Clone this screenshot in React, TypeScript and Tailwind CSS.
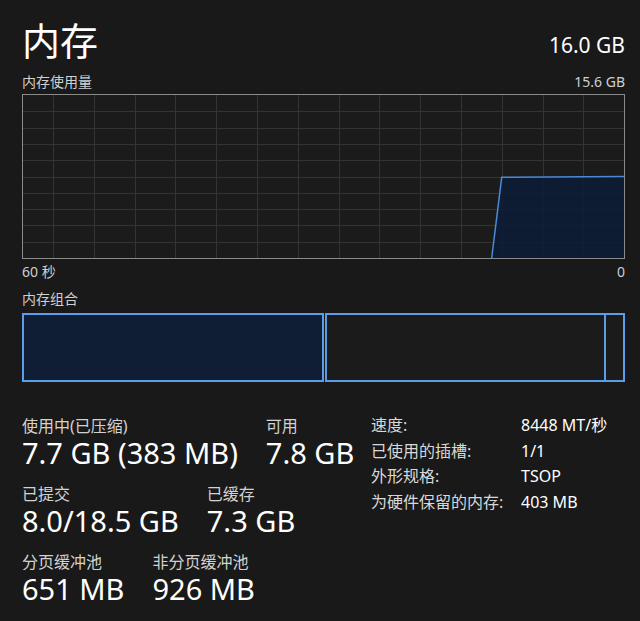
import React from 'react';

const FONT = '"Noto Sans", "Noto Sans CJK SC", sans-serif';

const vLines = Array.from({ length: 14 }, (_, i) => 30 + i * 40.8);
const hLines = Array.from({ length: 9 }, (_, i) => (i + 1) * 16.3);

function UsageGraph() {
  return (
    <div className="w-[603px] h-[165px] border border-[#8a8a8a] bg-[#1b1b1b]">
      <svg width={601} height={163} viewBox="0 0 601 163" className="block">
        {vLines.map((x) => (
          <line key={`v${x}`} x1={Math.round(x) + 0.5} y1={0} x2={Math.round(x) + 0.5} y2={163} stroke="#333333" strokeWidth={1} />
        ))}
        {hLines.map((y) => (
          <line key={`h${y}`} x1={0} y1={Math.round(y) + 0.5} x2={601} y2={Math.round(y) + 0.5} stroke="#333333" strokeWidth={1} />
        ))}
        <path d="M468.7 163 L478.7 82.3 L601 81.5 L601 163 Z" fill="#0b1c36" fillOpacity={0.85} />
        <path d="M468.7 163 L478.7 82.3 L601 81.5" fill="none" stroke="#4a8ad6" strokeWidth={1.5} />
      </svg>
    </div>
  );
}

function Composition() {
  return (
    <div className="flex w-[603px] h-[69px]">
      <div className="w-[302px] h-full border-2 border-[#5a9eea] bg-[#0f1d35]" />
      <div className="ml-px w-[281px] h-full border-2 border-[#5a9eea] bg-[#1b1b1b]" />
      <div className="w-[19px] h-full border-y-2 border-r-2 border-[#5a9eea] bg-[#1b1b1b]" />
    </div>
  );
}

function Stat({ label, value }: { label: string; value: string }) {
  return (
    <div className="flex flex-col">
      <span className="h-[20px] leading-[20px] text-[16px] text-[#d2d2d2] whitespace-nowrap">{label}</span>
      <span className="h-[34px] leading-[34px] text-[29px] text-white whitespace-nowrap">{value}</span>
    </div>
  );
}

const specs = [
  ['速度:', '8448 MT/秒'],
  ['已使用的插槽:', '1/1'],
  ['外形规格:', 'TSOP'],
  ['为硬件保留的内存:', '403 MB'],
];

export default function App() {
  return (
    <div className="w-[640px] h-[621px] bg-[#191919] text-white pl-[22px] pr-[15px] overflow-hidden" style={{ fontFamily: FONT }}>
      {/* header */}
      <div className="flex justify-between items-center h-[40px] mt-[20px]">
        <span className="text-[38px] leading-[40px]">内存</span>
        <span className="text-[21px] leading-[24px] pt-[10px]">16.0 GB</span>
      </div>

      <div className="flex justify-between items-center h-[18px] mt-[12px] text-[14px] text-[#d0d0d0]">
        <span>内存使用量</span>
        <span>15.6 GB</span>
      </div>

      <div className="mt-[4px]">
        <UsageGraph />
      </div>

      <div className="flex justify-between items-center w-[603px] h-[20px] mt-[2px] text-[14px] text-[#d0d0d0]">
        <span>60 秒</span>
        <span>0</span>
      </div>

      <div className="flex items-center h-[20px] mt-[7px] text-[14px] text-[#d0d0d0]">内存组合</div>

      <div className="mt-[5px]">
        <Composition />
      </div>

      {/* stats */}
      <div className="flex mt-[34px]">
        <div className="w-[349px] flex flex-col gap-[14px]">
          <div className="flex gap-[28px]">
            <Stat label="使用中(已压缩)" value="7.7 GB (383 MB)" />
            <Stat label="可用" value="7.8 GB" />
          </div>
          <div className="flex gap-[28px]">
            <Stat label="已提交" value="8.0/18.5 GB" />
            <Stat label="已缓存" value="7.3 GB" />
          </div>
          <div className="flex gap-[28px]">
            <Stat label="分页缓冲池" value="651 MB" />
            <Stat label="非分页缓冲池" value="926 MB" />
          </div>
        </div>
        <div className="grid grid-cols-[150px_1fr] mt-[-3px] text-[16px] leading-[25.5px] h-fit">
          {specs.map(([k, v]) => (
            <React.Fragment key={k}>
              <span className="text-[#d8d8d8] whitespace-nowrap">{k}</span>
              <span className="text-white whitespace-nowrap">{v}</span>
            </React.Fragment>
          ))}
        </div>
      </div>
    </div>
  );
}
